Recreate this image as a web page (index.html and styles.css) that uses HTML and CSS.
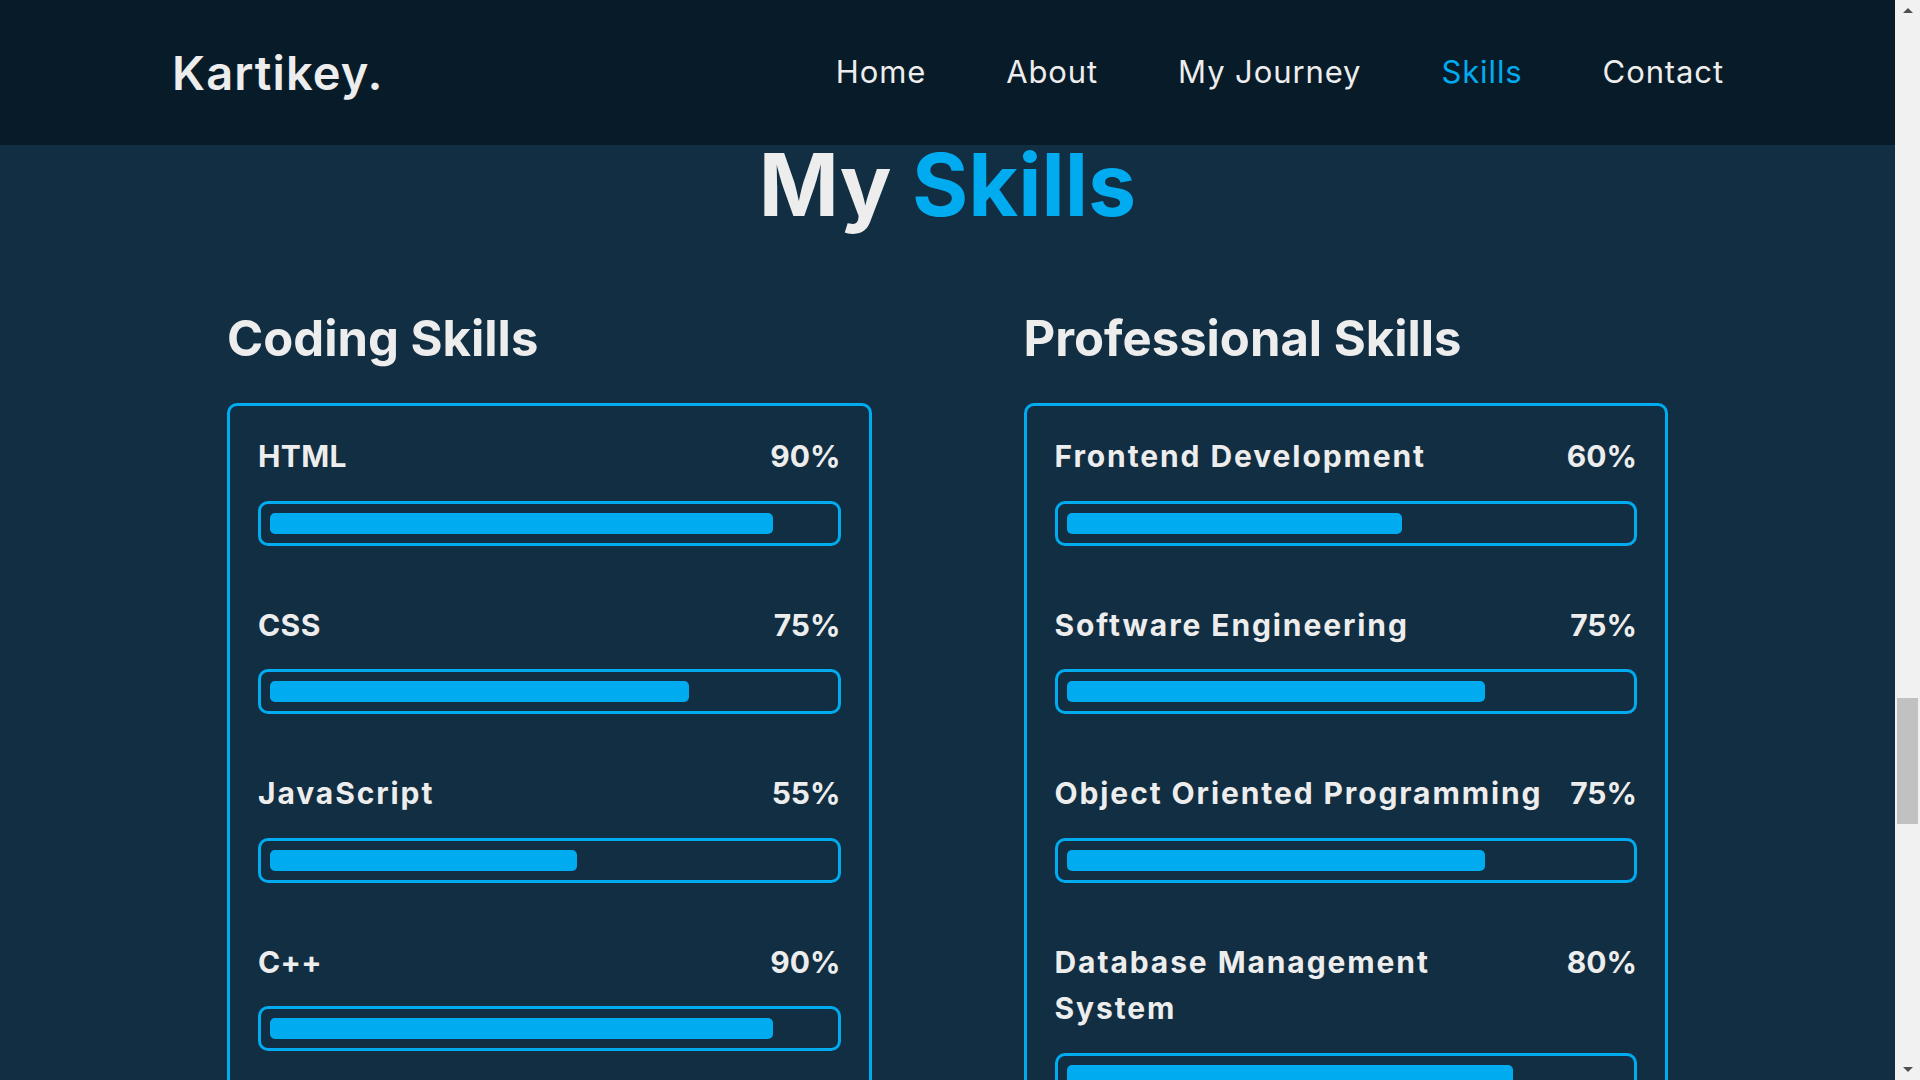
FILE: index.html
```html
<!DOCTYPE html>
<html lang="en">
<head>
<meta charset="utf-8">
<title>Kartikey - Skills</title>
<link rel="stylesheet" href="styles.css">
</head>
<body>
<div class="page">
  <div class="viewport">
    <header class="navbar">
      <a class="logo" href="#">Kartikey.</a>
      <nav class="menu">
        <a href="#">Home</a>
        <a href="#">About</a>
        <a href="#">My Journey</a>
        <a href="#" class="active">Skills</a>
        <a href="#">Contact</a>
      </nav>
    </header>
    <section class="skills">
      <h2 class="title">My <span>Skills</span></h2>
      <div class="columns">
        <div class="column">
          <h3 class="column-title">Coding Skills</h3>
          <div class="card">
            <div class="skill">
              <div class="skill-head"><span class="name caps">HTML</span><span class="pct">90%</span></div>
              <div class="bar"><span class="fill" style="width:90%"></span></div>
            </div>
            <div class="skill">
              <div class="skill-head"><span class="name caps">CSS</span><span class="pct">75%</span></div>
              <div class="bar"><span class="fill" style="width:75%"></span></div>
            </div>
            <div class="skill">
              <div class="skill-head"><span class="name">JavaScript</span><span class="pct">55%</span></div>
              <div class="bar"><span class="fill" style="width:55%"></span></div>
            </div>
            <div class="skill">
              <div class="skill-head"><span class="name caps">C++</span><span class="pct">90%</span></div>
              <div class="bar"><span class="fill" style="width:90%"></span></div>
            </div>
          </div>
        </div>
        <div class="column">
          <h3 class="column-title">Professional Skills</h3>
          <div class="card">
            <div class="skill">
              <div class="skill-head"><span class="name">Frontend Development</span><span class="pct">60%</span></div>
              <div class="bar"><span class="fill" style="width:60%"></span></div>
            </div>
            <div class="skill">
              <div class="skill-head"><span class="name">Software Engineering</span><span class="pct">75%</span></div>
              <div class="bar"><span class="fill" style="width:75%"></span></div>
            </div>
            <div class="skill">
              <div class="skill-head"><span class="name">Object Oriented Programming</span><span class="pct">75%</span></div>
              <div class="bar"><span class="fill" style="width:75%"></span></div>
            </div>
            <div class="skill">
              <div class="skill-head"><span class="name narrow">Database Management System</span><span class="pct">80%</span></div>
              <div class="bar"><span class="fill" style="width:80%"></span></div>
            </div>
          </div>
        </div>
      </div>
    </section>
  </div>
  <aside class="scrollbar">
    <span class="arrow up"></span>
    <span class="track-top"></span>
    <span class="thumb"></span>
    <span class="track-bottom"></span>
    <span class="arrow down"></span>
  </aside>
</div>
</body>
</html>
```
FILE: styles.css
```css
* {
  box-sizing: border-box;
  margin: 0;
  padding: 0;
}

html, body {
  height: 100%;
  overflow: hidden;
}

body {
  font-family: "Inter", "Noto Sans", sans-serif;
  color: #ededed;
  background: #112e42;
}

a {
  text-decoration: none;
  color: inherit;
}

.page {
  display: flex;
  height: 100vh;
}

.viewport {
  flex: 1;
  min-width: 0;
  overflow: hidden;
  background: #112e42;
}

/* NAV */
.navbar {
  height: 145px;
  background: #081b29;
  display: flex;
  align-items: center;
  justify-content: space-between;
  padding: 0 171px 0 172px;
}

.logo {
  font-size: 47px;
  font-weight: 600;
  line-height: 1;
  color: #ededed;
  letter-spacing: 1.1px;
}

.menu {
  display: flex;
  gap: 80px;
  margin-top: -2px;
}

.menu a {
  font-size: 31px;
  font-weight: 400;
  line-height: 1;
  color: #ededed;
  letter-spacing: 0.9px;
}

.menu a.active {
  color: #00abf0;
}

/* SKILLS */
.skills {
  padding: 0 227px;
}

.title {
  text-align: center;
  font-size: 86px;
  font-weight: 700;
  line-height: 80px;
  color: #ededed;
}

.title span {
  color: #00abf0;
}

.columns {
  display: grid;
  grid-template-columns: 1fr 1fr;
  column-gap: 152px;
  margin-top: 89px;
}

.column-title {
  font-size: 49px;
  font-weight: 700;
  line-height: 50px;
  margin-bottom: 39px;
  color: #ededed;
}

.card {
  border: 3px solid #00abf0;
  border-radius: 10px;
  padding: 27px 28px 0 28px;
  height: 800px;
}

.skill {
  margin-bottom: 56px;
}

.skill-head {
  display: flex;
  justify-content: space-between;
  align-items: flex-start;
  gap: 22px;
  font-size: 30px;
  font-weight: 700;
  line-height: 46.5px;
}

.name {
  letter-spacing: 1.9px;
}

.name.caps {
  letter-spacing: 0.4px;
}

.name.narrow {
  max-width: 420px;
}

.bar {
  margin-top: 21px;
  height: 45px;
  border: 3px solid #00abf0;
  border-radius: 10px;
  padding: 9px;
}

.fill {
  display: block;
  height: 21px;
  background: #00abf0;
  border-radius: 5px;
}

/* FAKE SCROLLBAR */
.scrollbar {
  width: 25px;
  height: 100vh;
  background: #f1f1f1;
  display: flex;
  flex-direction: column;
  align-items: center;
}

.arrow {
  width: 0;
  height: 0;
  border-left: 5px solid transparent;
  border-right: 5px solid transparent;
  margin: 8px 0;
}

.arrow.up {
  border-bottom: 5px solid #505050;
}

.arrow.down {
  border-top: 5px solid #505050;
}

.track-top {
  height: 677px;
}

.thumb {
  width: 21px;
  height: 126px;
  background: #c1c1c1;
}

.track-bottom {
  flex: 1;
}
```
